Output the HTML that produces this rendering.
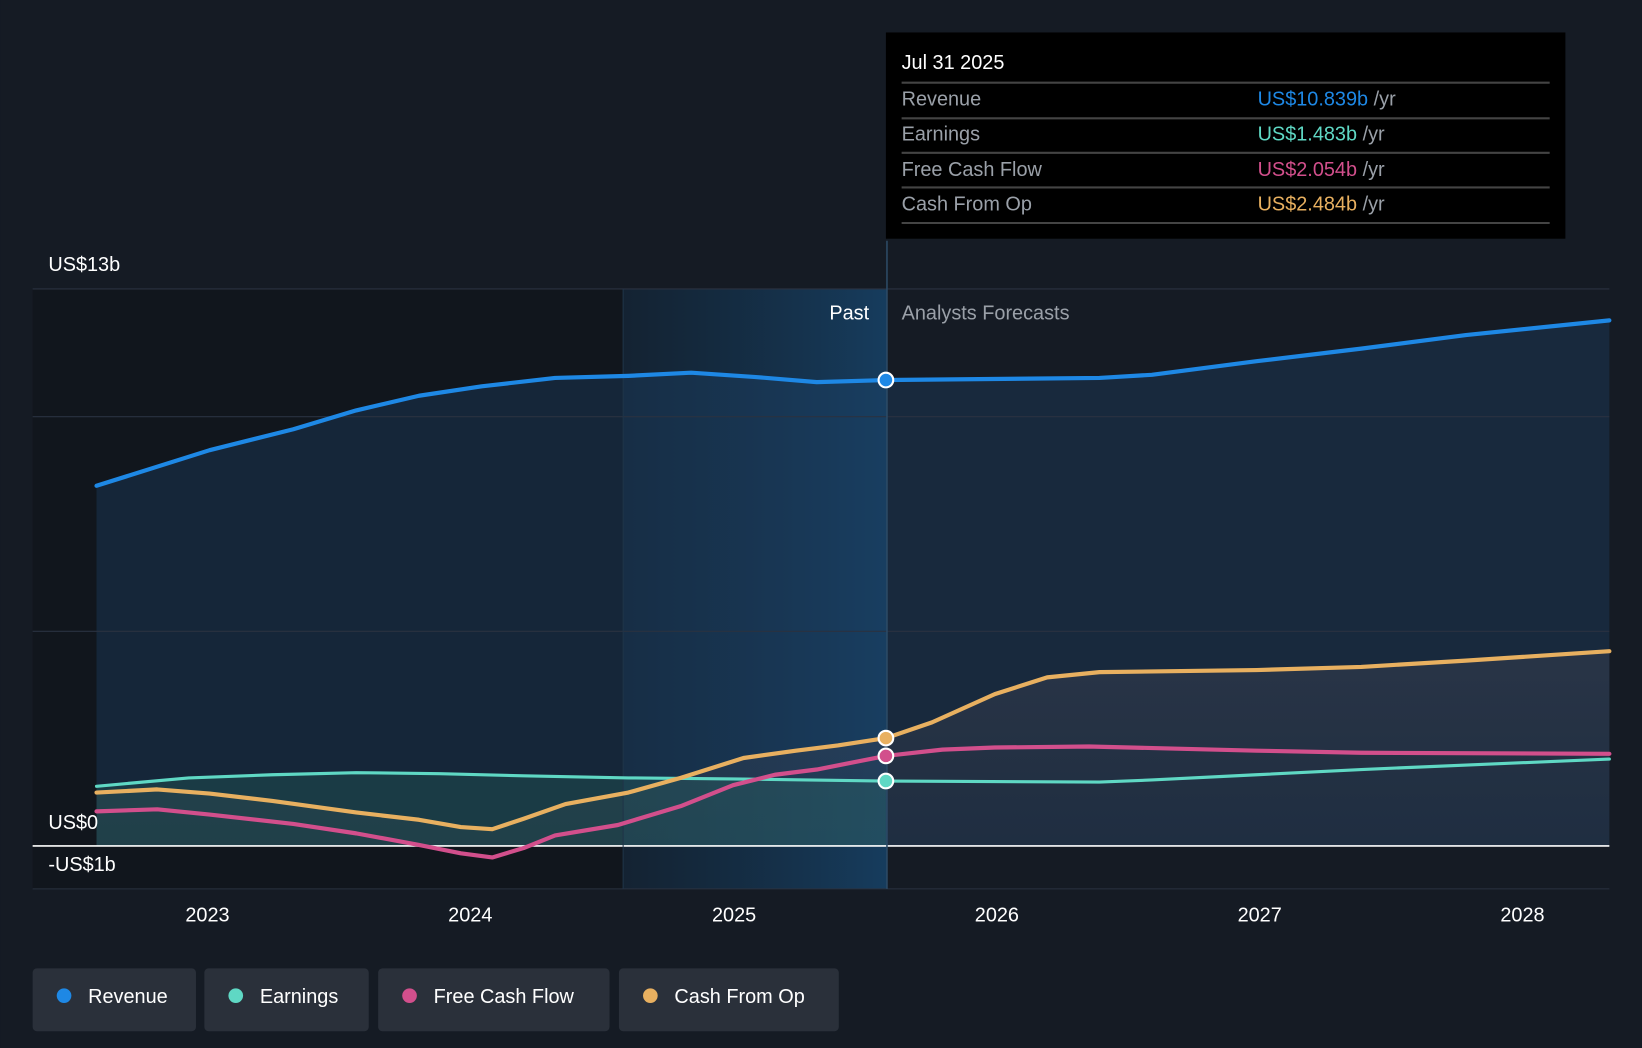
<!DOCTYPE html>
<html><head><meta charset="utf-8"><style>
html,body{margin:0;padding:0;background:#151b24;}
svg{display:block;font-family:"Liberation Sans",Arial,sans-serif;}
</style></head><body>
<svg width="1642" height="1048" viewBox="0 0 1568 1001" xmlns="http://www.w3.org/2000/svg">
<defs>
<linearGradient id="hl" x1="0" x2="1" y1="0" y2="0">
<stop offset="0" stop-color="#13283c" stop-opacity="0.6"/>
<stop offset="1" stop-color="#164064" stop-opacity="0.9"/>
</linearGradient>
<linearGradient id="gr" x1="0" x2="0" y1="0" y2="1">
<stop offset="0" stop-color="#3a4050" stop-opacity="0.5"/>
<stop offset="1" stop-color="#3a4050" stop-opacity="0.2"/>
</linearGradient>
</defs>
<rect width="1568" height="1001" fill="#151b24"/>
<rect x="31" y="276" width="564" height="573" fill="#11161d"/>
<rect x="595" y="276" width="252" height="573" fill="url(#hl)"/>
<polygon fill="#1d4266" fill-opacity="0.38" points="92,464 200,430 280,410 340,392 400,378 460,369 530,361 600,359 660,356 720,360 780,365 846,363 1050,361 1100,358 1200,345 1300,333 1400,320 1537,306 1537,808 92,808"/>
<polygon fill="url(#gr)" points="92,757 150,754 200,758 260,765 340,776 400,783 440,790 470,792 500,782 540,768 600,757 650,743 710,724 760,717 800,712 846,705 890,690 950,663 1000,647 1050,642 1200,640 1300,637 1400,631 1537,622 1537,808 92,808"/>
<polygon fill="#2a7a6a" fill-opacity="0.25" points="92,751 180,743 260,740 340,738 420,739 500,741 600,743 700,744 846,746 846,808 92,808"/>
<g stroke="#2a3240" stroke-width="1">
<line x1="31" y1="276" x2="1537" y2="276"/>
<line x1="31" y1="398" x2="1537" y2="398"/>
<line x1="31" y1="603" x2="1537" y2="603"/>
<line x1="31" y1="849" x2="1537" y2="849"/>
</g>
<line x1="31" y1="808" x2="1537" y2="808" stroke="#ffffff" stroke-width="1.5"/>
<line x1="847" y1="230" x2="847" y2="849" stroke="#2c4a66" stroke-width="1.5"/>
<line x1="595" y1="276" x2="595" y2="849" stroke="#1f3448" stroke-width="1"/>
<g fill="none" stroke-width="4" stroke-linejoin="round" stroke-linecap="round">
<polyline stroke="#1e88e5" points="92,464 200,430 280,410 340,392 400,378 460,369 530,361 600,359 660,356 720,360 780,365 846,363 1050,361 1100,358 1200,345 1300,333 1400,320 1537,306"/>
<polyline stroke="#5fd8c4" stroke-width="3" points="92,751 180,743 260,740 340,738 420,739 500,741 600,743 700,744 846,746 1050,747 1100,745 1200,740 1300,735 1537,725"/>
<polyline stroke="#e8b060" points="92,757 150,754 200,758 260,765 340,776 400,783 440,790 470,792 500,782 540,768 600,757 650,743 710,724 760,717 800,712 846,705 890,690 950,663 1000,647 1050,642 1200,640 1300,637 1400,631 1537,622"/>
<polyline stroke="#d24f8c" points="92,775 150,773 200,778 280,787 340,796 400,807 440,815 470,819 500,810 530,798 590,788 650,770 700,750 740,740 780,735 846,722 900,716 950,714 1040,713 1200,717 1300,719 1537,720"/>
</g>
<g stroke="#fff" stroke-width="2">
<circle cx="846" cy="363" r="7" fill="#1e88e5"/>
<circle cx="846" cy="705" r="7" fill="#e8b060"/>
<circle cx="846" cy="722" r="7" fill="#d24f8c"/>
<circle cx="846" cy="746" r="7" fill="#5fd8c4"/>
</g>
<g font-size="19" fill="#fff">
<text x="46" y="259">US$13b</text>
<text x="46" y="792">US$0</text>
<text x="46" y="832">-US$1b</text>
<text x="830" y="305" text-anchor="end">Past</text>
<text x="861" y="305" fill="#9aa0a8">Analysts Forecasts</text>
<g text-anchor="middle">
<text x="198" y="880">2023</text><text x="449" y="880">2024</text><text x="701" y="880">2025</text>
<text x="952" y="880">2026</text><text x="1203" y="880">2027</text><text x="1454" y="880">2028</text>
</g>
</g>
<rect x="846" y="31" width="649" height="197" fill="#000"/>
<g stroke="#444" stroke-width="2">
<line x1="861" y1="79" x2="1480" y2="79"/><line x1="861" y1="113" x2="1480" y2="113"/>
<line x1="861" y1="146" x2="1480" y2="146"/><line x1="861" y1="179" x2="1480" y2="179"/>
<line x1="861" y1="213" x2="1480" y2="213"/>
</g>
<g font-size="19">
<text x="861" y="66" fill="#fff">Jul 31 2025</text>
<text x="861" y="101" fill="#9aa0a8">Revenue</text>
<text x="861" y="134" fill="#9aa0a8">Earnings</text>
<text x="861" y="168" fill="#9aa0a8">Free Cash Flow</text>
<text x="861" y="201" fill="#9aa0a8">Cash From Op</text>
<text x="1201" y="101" fill="#1e88e5">US$10.839b <tspan fill="#9aa0a8">/yr</tspan></text>
<text x="1201" y="134" fill="#5fd8c4">US$1.483b <tspan fill="#9aa0a8">/yr</tspan></text>
<text x="1201" y="168" fill="#d24f8c">US$2.054b <tspan fill="#9aa0a8">/yr</tspan></text>
<text x="1201" y="201" fill="#e8b060">US$2.484b <tspan fill="#9aa0a8">/yr</tspan></text>
</g>
<g font-size="19" fill="#fff">
<rect x="31" y="925" width="156" height="60" rx="4" fill="#2a303a"/>
<circle cx="61" cy="951" r="7" fill="#1e88e5"/><text x="84" y="958">Revenue</text>
<rect x="195" y="925" width="157" height="60" rx="4" fill="#2a303a"/>
<circle cx="225" cy="951" r="7" fill="#5fd8c4"/><text x="248" y="958">Earnings</text>
<rect x="361" y="925" width="221" height="60" rx="4" fill="#2a303a"/>
<circle cx="391" cy="951" r="7" fill="#d24f8c"/><text x="414" y="958">Free Cash Flow</text>
<rect x="591" y="925" width="210" height="60" rx="4" fill="#2a303a"/>
<circle cx="621" cy="951" r="7" fill="#e8b060"/><text x="644" y="958">Cash From Op</text>
</g>
</svg>
</body></html>
